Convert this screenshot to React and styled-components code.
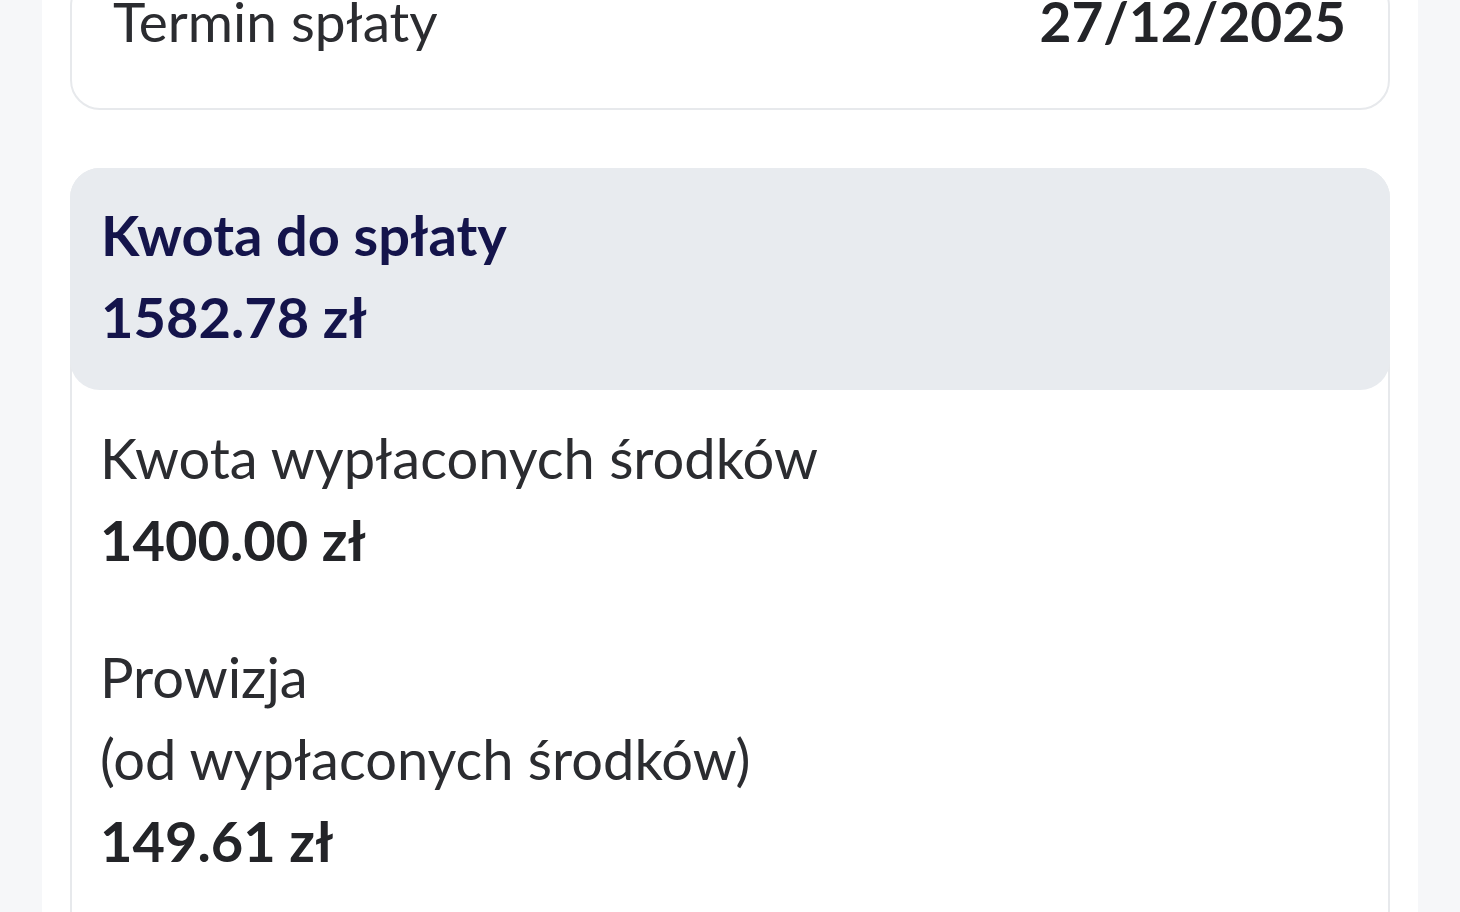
import React from 'react';
import styled, { createGlobalStyle } from 'styled-components';

const GlobalStyle = createGlobalStyle`
  html, body {
    margin: 0;
    padding: 0;
    background: #f6f7f9;
  }
  body {
    font-family: Lato, "Noto Sans", "Open Sans", sans-serif;
    -webkit-font-smoothing: antialiased;
  }
`;

const Page = styled.div`
  margin: 0 42px;
  height: 912px;
  background: #ffffff;
  padding: 0 28px;
  overflow: hidden;
`;

const Card = styled.section`
  border: 2px solid #e7e9ec;
  border-radius: 30px;
  background: #ffffff;
  margin-top: ${p => p.$offset || 0}px;
  margin-bottom: 58px;
  padding-bottom: ${p => p.$tail || 0}px;
`;

const TermRow = styled.div`
  display: flex;
  justify-content: space-between;
  align-items: baseline;
  padding: 10px 42px 54px 41px;
  font-size: 55px;
  line-height: 66px;
  color: #2b2c30;
`;

const TermValue = styled.span`
  font-weight: 700;
  color: #232428;
`;

const Highlight = styled.div`
  background: #e8ebef;
  border-radius: 30px;
  margin: -2px -2px 0;
  padding: 26px 31px 32px;
  color: #14144b;
  font-size: 56px;
  line-height: 82px;
  font-weight: 700;
`;

const Item = styled.div`
  padding: 0 28px;
  margin-top: ${p => p.$gap}px;
  font-size: 56px;
  line-height: 82px;
`;

const Label = styled.div`
  color: #2b2c30;
  font-weight: 400;
`;

const Amount = styled.div`
  color: #232428;
  font-weight: 700;
`;

const rows = [
  { label: ['Kwota wypłaconych środków'], amount: '1400.00 zł', gap: 27 },
  { label: ['Prowizja', '(od wypłaconych środków)'], amount: '149.61 zł', gap: 55 },
];

export default function App() {
  return (
    <>
      <GlobalStyle />
      <Page>
        <Card $offset={-24}>
          <TermRow>
            <span>Termin spłaty</span>
            <TermValue>27/12/2025</TermValue>
          </TermRow>
        </Card>

        <Card $tail={60}>
          <Highlight>
            <div>Kwota do spłaty</div>
            <div>1582.78 zł</div>
          </Highlight>
          {rows.map(r => (
            <Item key={r.amount} $gap={r.gap}>
              {r.label.map(l => <Label key={l}>{l}</Label>)}
              <Amount>{r.amount}</Amount>
            </Item>
          ))}
        </Card>
      </Page>
    </>
  );
}
